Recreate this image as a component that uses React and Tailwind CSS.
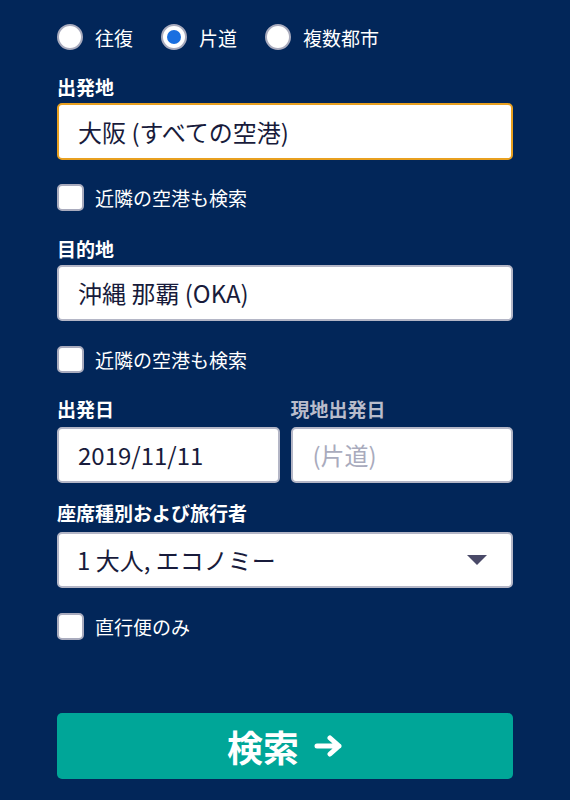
import { useState } from 'react'

const FONT = { fontFamily: '"Noto Sans CJK JP", "Noto Sans", sans-serif' }

function Radio({ checked, label, onClick }) {
  return (
    <button type="button" onClick={onClick} className="flex items-center gap-3">
      <span className="flex h-[26px] w-[26px] items-center justify-center rounded-full border-2 border-[#a9abbd] bg-white">
        {checked && <span className="h-[14px] w-[14px] rounded-full bg-[#1a6fe0]" />}
      </span>
      <span className="text-[19px] leading-none text-white">{label}</span>
    </button>
  )
}

function Check({ label, className = '' }) {
  const [on, setOn] = useState(false)
  return (
    <label className={`flex items-center gap-[11px] ${className}`}>
      <span
        onClick={() => setOn(!on)}
        className="flex h-[27px] w-[27px] items-center justify-center rounded-[5px] border-2 border-[#a9abbd] bg-white"
      >
        {on && <span className="text-sm text-[#1a6fe0]">✓</span>}
      </span>
      <span className="text-[19px] leading-none text-white">{label}</span>
    </label>
  )
}

function Label({ children, dim, className = '' }) {
  return (
    <div className={`text-[19px] font-bold leading-[22px] ${dim ? 'text-[#b9bccb]' : 'text-white'} ${className}`}>
      {children}
    </div>
  )
}

const box = 'flex items-center rounded-[5px] border-2 bg-white text-[24px]'

export default function App() {
  const [trip, setTrip] = useState('oneway')

  return (
    <div style={FONT} className="min-h-[800px] w-[570px] bg-[#022659] px-[57px] pt-[24px]">
      <div className="flex items-center">
        <Radio checked={trip === 'round'} label="往復" onClick={() => setTrip('round')} />
        <div className="ml-[28px]">
          <Radio checked={trip === 'oneway'} label="片道" onClick={() => setTrip('oneway')} />
        </div>
        <div className="ml-[28px]">
          <Radio checked={trip === 'multi'} label="複数都市" onClick={() => setTrip('multi')} />
        </div>
      </div>

      <Label className="mt-[26px]">出発地</Label>
      <div className={`${box} mt-[5px] h-[57px] rounded-[3px] border-[#e8a020] pl-[19px] text-[#181b3b]`}>
        大阪 (すべての空港)
      </div>

      <Check label="近隣の空港も検索" className="mt-[24px]" />

      <Label className="mt-[27px]">目的地</Label>
      <div className={`${box} mt-[5px] h-[56px] border-[#b4b6c6] pl-[19px] text-[#181b3b]`}>
        沖縄 那覇 (OKA)
      </div>

      <Check label="近隣の空港も検索" className="mt-[25px]" />

      <div className="mt-[25px] grid grid-cols-2 gap-[11px]">
        <div>
          <Label>出発日</Label>
          <div className={`${box} mt-[7px] h-[56px] border-[#b4b6c6] pl-[19px] text-[#181b3b]`}>
            2019/11/11
          </div>
        </div>
        <div>
          <Label dim>現地出発日</Label>
          <div className={`${box} mt-[7px] h-[56px] border-[#b4b6c6] pl-[20px] text-[#a9abbd]`}>
            (片道)
          </div>
        </div>
      </div>

      <Label className="mt-[19px]">座席種別および旅行者</Label>
      <div className={`${box} mt-[8px] h-[56px] justify-between border-[#b4b6c6] pl-[18px] pr-[24px] text-[#181b3b]`}>
        <span>1 大人, エコノミー</span>
        <svg width="20" height="10" viewBox="0 0 20 10">
          <path d="M0 0 L20 0 L10 10 Z" fill="#4a4a68" />
        </svg>
      </div>

      <Check label="直行便のみ" className="mt-[25px]" />

      <button
        type="button"
        className="mt-[73px] flex h-[66px] w-full items-center justify-center gap-[15px] rounded-[5px] bg-[#00a698] text-[36px] font-bold leading-none text-white"
      >
        検索
        <svg width="29" height="22" viewBox="0 0 29 22" fill="none" stroke="white" strokeWidth="5" strokeLinecap="round" strokeLinejoin="round">
          <path d="M3 11 H25 M16 3 L25 11 L16 19" />
        </svg>
      </button>
    </div>
  )
}
